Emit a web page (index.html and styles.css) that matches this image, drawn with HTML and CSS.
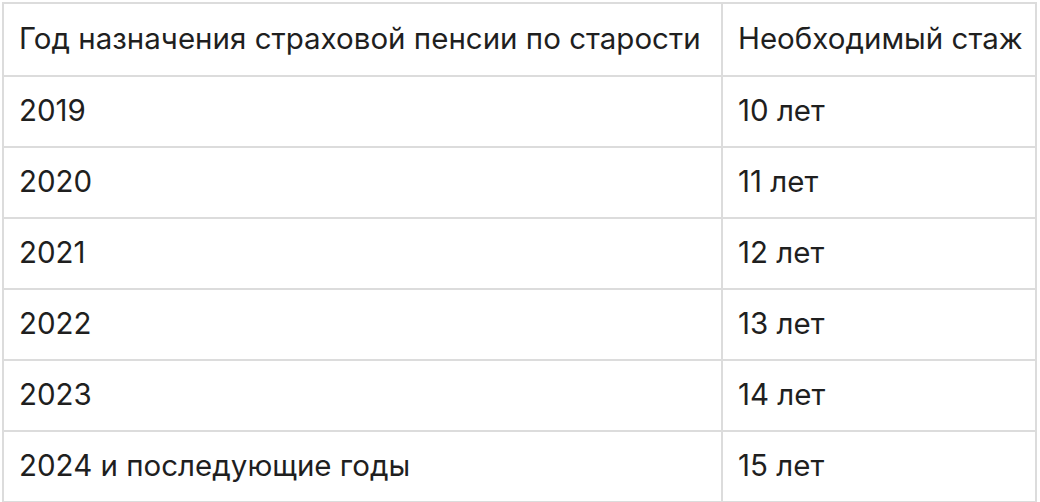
FILE: index.html
```html
<!DOCTYPE html>
<html lang="ru">
<head>
<meta charset="utf-8">
<link rel="stylesheet" href="styles.css">
</head>
<body>
<table class="stazh">
  <colgroup><col class="c1"><col class="c2"></colgroup>
  <thead>
    <tr><th>Год назначения страховой пенсии по старости</th><th>Необходимый стаж</th></tr>
  </thead>
  <tbody>
    <tr><td>2019</td><td>10 лет</td></tr>
    <tr><td>2020</td><td>11 лет</td></tr>
    <tr><td>2021</td><td>12 лет</td></tr>
    <tr><td>2022</td><td>13 лет</td></tr>
    <tr><td>2023</td><td>14 лет</td></tr>
    <tr><td>2024 и последующие годы</td><td>15 лет</td></tr>
  </tbody>
</table>
</body>
</html>
```
FILE: styles.css
```css
html, body { margin: 0; padding: 0; background: #fff; }
body { padding: 2px 0 0 2px; }
.stazh {
  border-collapse: collapse;
  table-layout: fixed;
  width: 1035px;
  font-family: Inter, "Liberation Sans", Arial, sans-serif;
  font-size: 29.5px;
  color: #1f1f1f;
}
.c1 { width: 719px; }
.stazh th, .stazh td {
  border: 2px solid #dcdcdc;
  padding: 0 0 3px 15px;
  text-align: left;
  font-weight: normal;
  vertical-align: middle;
  white-space: nowrap;
  height: 71px;
  box-sizing: border-box;
}
.stazh th { height: 73px; }
```
